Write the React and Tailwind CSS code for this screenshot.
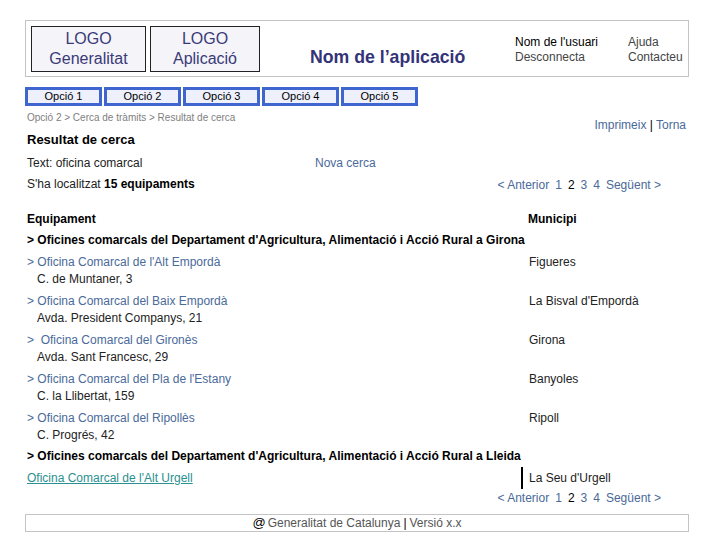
import React from 'react';

const menu = ['Opció 1', 'Opció 2', 'Opció 3', 'Opció 4', 'Opció 5'];

const girona = [
    { name: 'Oficina Comarcal de l\'Alt Empordà', addr: 'C. de Muntaner, 3', town: 'Figueres' },
    { name: 'Oficina Comarcal del Baix Empordà', addr: 'Avda. President Companys, 21', town: 'La Bisval d\'Empordà' },
    { name: 'Oficina Comarcal del Gironès', addr: 'Avda. Sant Francesc, 29', town: 'Girona', wide: true },
    { name: 'Oficina Comarcal del Pla de l\'Estany', addr: 'C. la Llibertat, 159', town: 'Banyoles' },
    { name: 'Oficina Comarcal del Ripollès', addr: 'C. Progrés, 42', town: 'Ripoll' }
];

const Pager = () => (
    <div className="flex justify-end pr-[28px] h-[18px] leading-[18px] text-[12px] text-[#4a6a9a]">
        <span>&lt; Anterior</span>
        <span className="ml-[6px]">1</span>
        <span className="ml-[6px] text-black">2</span>
        <span className="ml-[6px]">3</span>
        <span className="ml-[6px]">4</span>
        <span className="ml-[6px]">Següent &gt;</span>
    </div>
);

export default function App() {
    return (
        <div className="w-[720px] h-[540px] bg-white overflow-hidden" style={{ fontFamily: '"Liberation Sans", Arial, sans-serif' }}>
            <div className="ml-[25px] w-[664px] pt-[20px]">
                {/* Header */}
                <div className="h-[57px] border border-[#c4c4c4] flex items-start">
                    <div className="ml-[5px] mt-[5px] w-[115px] h-[46px] border border-[#222] bg-[#f4f4f9] flex flex-col items-center justify-center text-[16px] leading-[20px] text-[#3a3a78]">
                        <span>LOGO</span>
                        <span>Generalitat</span>
                    </div>
                    <div className="ml-[4px] mt-[5px] w-[110px] h-[46px] border border-[#222] bg-[#f4f4f9] flex flex-col items-center justify-center text-[16px] leading-[20px] text-[#3a3a78]">
                        <span>LOGO</span>
                        <span>Aplicació</span>
                    </div>
                    <div className="ml-[50px] mt-[26px] w-[158px] text-[17.7px] leading-[20px] font-bold text-[#333377] whitespace-nowrap">
                        Nom de l’aplicació
                    </div>
                    <div className="ml-[47px] mt-[14px] w-[113px] text-[12px] leading-[15px]">
                        <div className="text-black">Nom de l'usuari</div>
                        <div className="text-[#444]">Desconnecta</div>
                    </div>
                    <div className="mt-[14px] text-[12px] leading-[15px] text-[#444]">
                        <div>Ajuda</div>
                        <div>Contacteu</div>
                    </div>
                </div>

                {/* Menu */}
                <div className="mt-[10px] flex gap-[2px]">
                    {menu.map((m) => (
                        <div key={m} className="w-[77px] h-[19px] border-[3px] border-[#3f65cf] bg-[#eef1fc] flex items-center justify-center text-[11px] text-black">
                            {m}
                        </div>
                    ))}
                </div>

                <div className="pl-[2px]">
                    <div className="mt-[5px] h-[21px] flex justify-between">
                        <span className="text-[10px] leading-[14px] text-[#808080]">Opció 2 &gt; Cerca de tràmits &gt; Resultat de cerca</span>
                        <span className="self-end pr-[3px] text-[12px] leading-[14px] text-[#4a6a9a]">
                            Imprimeix <span className="text-black">|</span> Torna
                        </span>
                    </div>
                    <div className="h-[16px] leading-[16px] text-[13px] font-bold text-black">Resultat de cerca</div>

                    <div className="mt-[5px] h-[21px] leading-[21px] text-[12px] flex">
                        <span className="w-[288px] text-[#222]">Text: oficina comarcal</span>
                        <span className="text-[#4a6a9a]">Nova cerca</span>
                    </div>
                    <div className="h-[21px] leading-[21px] text-[12px] flex justify-between">
                        <span className="text-[#222]">S'ha localitzat <b className="text-black">15 equipaments</b></span>
                        <div className="mt-[2px]"><Pager /></div>
                    </div>

                    <div className="mt-[14px] h-[21px] leading-[21px] text-[12px] font-bold flex">
                        <span className="w-[501px]">Equipament</span>
                        <span>Municipi</span>
                    </div>
                    <div className="h-[21px] leading-[21px] text-[12px] font-bold text-black whitespace-nowrap">
                        &gt; Oficines comarcals del Departament d'Agricultura, Alimentació i Acció Rural a Girona
                    </div>

                    {girona.map((o) => (
                        <div key={o.name} className="h-[39px] pt-[2px] grid grid-cols-[494px_1fr] text-[12px]">
                            <div>
                                <div className="h-[18px] leading-[18px] text-[#4a6a9a] whitespace-pre">{o.wide ? '>  ' : '> '}{o.name}</div>
                                <div className="h-[17px] leading-[17px] pl-[10px] text-[#222]">{o.addr}</div>
                            </div>
                            <div className="pl-[8px] h-[18px] leading-[18px] text-[#222]">{o.town}</div>
                        </div>
                    ))}

                    <div className="h-[21px] leading-[21px] text-[12px] font-bold text-black whitespace-nowrap">
                        &gt; Oficines comarcals del Departament d'Agricultura, Alimentació i Acció Rural a Lleida
                    </div>
                    <div className="h-[22px] grid grid-cols-[494px_1fr] text-[12px]">
                        <div className="leading-[22px]">
                            <span className="text-[#2a9090] underline">Oficina Comarcal de l'Alt Urgell</span>
                        </div>
                        <div className="border-l-2 border-black pl-[6px] leading-[22px] text-[#222]">La Seu d'Urgell</div>
                    </div>
                    <Pager />
                </div>

                {/* Footer */}
                <div className="mt-[7px] h-[18px] border border-[#c4c4c4] flex items-center justify-center text-[12px] text-[#555]">
                    <span className="text-black text-[13px] mr-[2px]">@</span>
                    Generalitat de Catalunya <span className="text-black mx-[3px]">|</span> Versió x.x
                </div>
            </div>
        </div>
    );
}
